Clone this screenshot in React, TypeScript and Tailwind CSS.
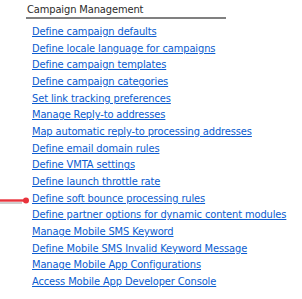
import React from "react";

const links = [
  "Define campaign defaults",
  "Define locale language for campaigns",
  "Define campaign templates",
  "Define campaign categories",
  "Set link tracking preferences",
  "Manage Reply-to addresses",
  "Map automatic reply-to processing addresses",
  "Define email domain rules",
  "Define VMTA settings",
  "Define launch throttle rate",
  "Define soft bounce processing rules",
  "Define partner options for dynamic content modules",
  "Manage Mobile SMS Keyword",
  "Define Mobile SMS Invalid Keyword Message",
  "Manage Mobile App Configurations",
  "Access Mobile App Developer Console",
];

const App = () => {
  return (
    <div className="relative w-[302px] h-[299px] bg-white overflow-hidden font-['DejaVu_Sans_Condensed','DejaVu_Sans',sans-serif] text-[11px] tracking-[-0.12px]">
      <div className="pl-[26px] pt-[3px]">
        <div className="w-[200px] border-b-2 border-[#808080] pl-px leading-[14px] text-[#2b2b2b]">
          Campaign Management
        </div>
        <ul className="mt-[5px] pl-[6px]">
          {links.map((link) => (
            <li key={link} className="leading-[16.67px]">
              <a href="#" className="text-[#0b5cd0] underline">
                {link}
              </a>
            </li>
          ))}
        </ul>
      </div>
      {/* red annotation arrow */}
      <svg className="absolute left-0 top-[195px]" width="32" height="12">
        <line x1="0" y1="8" x2="22" y2="8" stroke="#cfcfcf" strokeWidth="2" />
        <line x1="0" y1="5.5" x2="25" y2="5.5" stroke="#e8333c" strokeWidth="2.4" />
        <circle cx="26" cy="5.5" r="3" fill="#e8333c" />
      </svg>
    </div>
  );
};

export default App;
